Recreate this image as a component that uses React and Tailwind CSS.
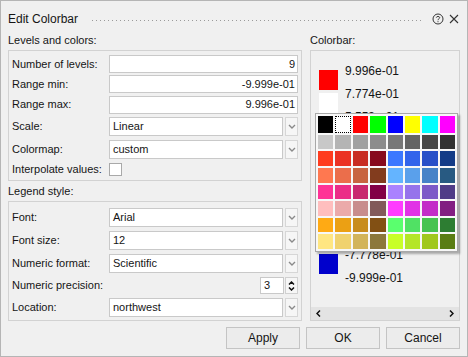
import React from "react";

const PALETTE = [
  ["#000000", "#ffffff", "#ff0000", "#00ff00", "#0000ff", "#ffff00", "#00ffff", "#ff00ff"],
  ["#c8c8c8", "#b4b4b4", "#a0a0a0", "#8c8c8c", "#787878", "#646464", "#464646", "#323232"],
  ["#ff3c1e", "#eb3223", "#c82d23", "#870a1e", "#3c78ff", "#3264eb", "#2850c8", "#143c87"],
  ["#ff7850", "#eb6e4b", "#c86441", "#823c1e", "#64b4ff", "#5aa0eb", "#4682c8", "#285a82"],
  ["#ff3296", "#eb2d87", "#c8286e", "#820046", "#aa82ff", "#9673eb", "#7d5ac8", "#503c87"],
  ["#ffbebe", "#ebaaaa", "#c88c8c", "#825a5a", "#ff3cff", "#e132e6", "#c32dc8", "#821e82"],
  ["#ffaa14", "#eba014", "#c88c1e", "#825014", "#5aff6e", "#50e164", "#46c350", "#2d7d32"],
  ["#ffe682", "#f0d26e", "#d2b45a", "#8c783c", "#c8ff28", "#b4e628", "#a0c81e", "#5a7d14"],
];

// colorbar levels, top to bottom
const SWATCHES = ["#ff0000", "#ffffff", "#ffffff", "#ffffff", "#ffffff", "#ffffff", "#ffffff", "#ffffff", "#0000cc"];
const LABELS = [
  "9.996e-01", "7.774e-01", "5.553e-01", "3.331e-01", "1.109e-01",
  "-1.112e-01", "-3.334e-01", "-5.556e-01", "-7.778e-01", "-9.999e-01",
];

function Chevron() {
  return (
    <svg width="8" height="5" viewBox="0 0 8 5">
      <path d="M1 1 L4 4 L7 1" fill="none" stroke="#8a8a8a" strokeWidth="1.4" />
    </svg>
  );
}

function TextField({ value }) {
  return (
    <div className="h-[18px] w-full bg-white border border-[#c9c9c9] flex items-center justify-end pr-[2px]">
      {value}
    </div>
  );
}

function Combo({ value }) {
  return (
    <div className="flex w-full gap-[2px] h-[19px]">
      <div className="flex-1 bg-white border border-[#c9c9c9] flex items-center pl-[3px]">{value}</div>
      <div className="w-[13px] border border-[#d6d6d6] bg-[#f6f6f6] flex items-center justify-center">
        <Chevron />
      </div>
    </div>
  );
}

function Row({ label, h, children }) {
  return (
    <div className={`flex items-center ${h}`}>
      <div className="w-[97px] shrink-0">{label}</div>
      <div className="flex-1 flex">{children}</div>
    </div>
  );
}

function Button({ children }) {
  return (
    <button className="w-[74px] h-[22px] border border-[#c4c4c4] bg-[#ececec] text-[12px]">
      {children}
    </button>
  );
}

export default function App() {
  return (
    <div className="w-[468px] h-[357px] bg-[#f0f0f0] border border-[#b5b5b5] flex flex-col overflow-hidden text-[11px] text-[#151515] font-['Liberation_Sans',Arial,sans-serif]">
      {/* title bar */}
      <div className="h-[29px] pt-[7px] flex items-center pl-[7px] pr-[7px]">
        <span className="text-[12px]">Edit Colorbar</span>
        <svg className="ml-[14px]" width="330" height="7">
          <defs>
            <pattern id="grip" width="4" height="4" patternUnits="userSpaceOnUse">
              <rect x="0" y="0" width="1" height="1" fill="#9a9a9a" />
            </pattern>
          </defs>
          <rect x="0" y="1" width="330" height="6" fill="url(#grip)" />
        </svg>
        <svg className="ml-[10px]" width="12" height="12" viewBox="0 0 12 12">
          <circle cx="6" cy="6" r="5" fill="none" stroke="#333" strokeWidth="1" />
          <path d="M4.3 4.6 C4.3 3.1 7.7 3.1 7.7 4.6 C7.7 5.8 6 5.7 6 7.2" fill="none" stroke="#333" strokeWidth="1" />
          <rect x="5.5" y="8.2" width="1" height="1" fill="#333" />
        </svg>
        <svg className="ml-[5px]" width="10" height="10" viewBox="0 0 10 10">
          <path d="M1 1 L9 9 M9 1 L1 9" stroke="#333" strokeWidth="1.1" />
        </svg>
      </div>

      <div className="flex gap-[8px] pl-[7px]">
        {/* left column */}
        <div className="w-[294px] flex flex-col">
          <div className="h-[20px] flex items-center">Levels and colors:</div>
          <div className="h-[131px] border border-[#d2d2d2] pt-[3px] pl-[3px] pr-[3px]">
            <Row label="Number of levels:" h="h-[20px]"><TextField value="9" /></Row>
            <Row label="Range min:" h="h-[20px]"><TextField value="-9.999e-01" /></Row>
            <Row label="Range max:" h="h-[21px]"><TextField value="9.996e-01" /></Row>
            <Row label="Scale:" h="h-[23px]"><Combo value="Linear" /></Row>
            <Row label="Colormap:" h="h-[22px]"><Combo value="custom" /></Row>
            <Row label="Interpolate values:" h="h-[19px]">
              <div className="w-[13px] h-[13px] bg-white border border-[#a9a9a9]" />
            </Row>
          </div>
          <div className="h-[20px] flex items-center">Legend style:</div>
          <div className="h-[120px] border border-[#d2d2d2] pt-[4px] pl-[3px] pr-[3px]">
            <Row label="Font:" h="h-[23px]"><Combo value="Arial" /></Row>
            <Row label="Font size:" h="h-[23px]"><Combo value="12" /></Row>
            <Row label="Numeric format:" h="h-[23px]"><Combo value="Scientific" /></Row>
            <Row label="Numeric precision:" h="h-[21px]">
              <div className="ml-auto flex gap-[1px] h-[17px]">
                <div className="w-[24px] bg-white border border-[#c9c9c9] flex items-center pl-[3px]">3</div>
                <div className="w-[13px] border border-[#d0d0d0] bg-[#f6f6f6] flex flex-col items-center justify-center gap-[2px]">
                  <svg width="7" height="4" viewBox="0 0 7 4">
                    <path d="M1 3.5 L3.5 1 L6 3.5" fill="none" stroke="#111" strokeWidth="1.5" />
                  </svg>
                  <svg width="7" height="4" viewBox="0 0 7 4">
                    <path d="M1 0.5 L3.5 3 L6 0.5" fill="none" stroke="#111" strokeWidth="1.5" />
                  </svg>
                </div>
              </div>
            </Row>
            <Row label="Location:" h="h-[23px]"><Combo value="northwest" /></Row>
          </div>
        </div>

        {/* right column */}
        <div className="w-[150px] flex flex-col">
          <div className="h-[20px] flex items-center">Colorbar:</div>
          <div className="relative h-[271px] border border-[#d2d2d2] flex flex-col">
            <div className="flex-1 flex pl-[8px] overflow-hidden">
              <div className="mt-[19px] flex flex-col gap-[3px]">
                {SWATCHES.map((c, i) => (
                  <div key={i} className="w-[19px] h-[20px]" style={{ backgroundColor: c }} />
                ))}
              </div>
              <div className="ml-[7px] mt-[8px] flex flex-col text-[12px]">
                {LABELS.map((l) => (
                  <div key={l} className="h-[23px] flex items-center">{l}</div>
                ))}
              </div>
            </div>
            <div className="h-[13px] bg-[#e3e3e3] flex items-center justify-between px-[5px]">
              <svg width="5" height="7" viewBox="0 0 5 7">
                <path d="M4 0.5 L1 3.5 L4 6.5" fill="none" stroke="#111" strokeWidth="1.5" />
              </svg>
              <svg width="5" height="7" viewBox="0 0 5 7">
                <path d="M1 0.5 L4 3.5 L1 6.5" fill="none" stroke="#111" strokeWidth="1.5" />
              </svg>
            </div>

            {/* color picker popup */}
            <div className="absolute left-[4px] top-[62px] border border-[#a8a8a8] bg-[#f7f7f7] p-[2px] shadow-[2px_2px_2px_rgba(0,0,0,0.3)]">
              <div className="grid grid-cols-8 gap-x-[2px] gap-y-[2px] w-[137px] h-[133px]">
                {PALETTE.flat().map((c, i) => (
                  <div
                    key={i}
                    className={i === 1 ? "border border-dotted border-black" : ""}
                    style={{ backgroundColor: c }}
                  />
                ))}
              </div>
            </div>
          </div>
        </div>
      </div>

      {/* dialog buttons */}
      <div className="mt-[6px] flex justify-end gap-[6px] pr-[7px]">
        <Button>Apply</Button>
        <Button>OK</Button>
        <Button>Cancel</Button>
      </div>
    </div>
  );
}
